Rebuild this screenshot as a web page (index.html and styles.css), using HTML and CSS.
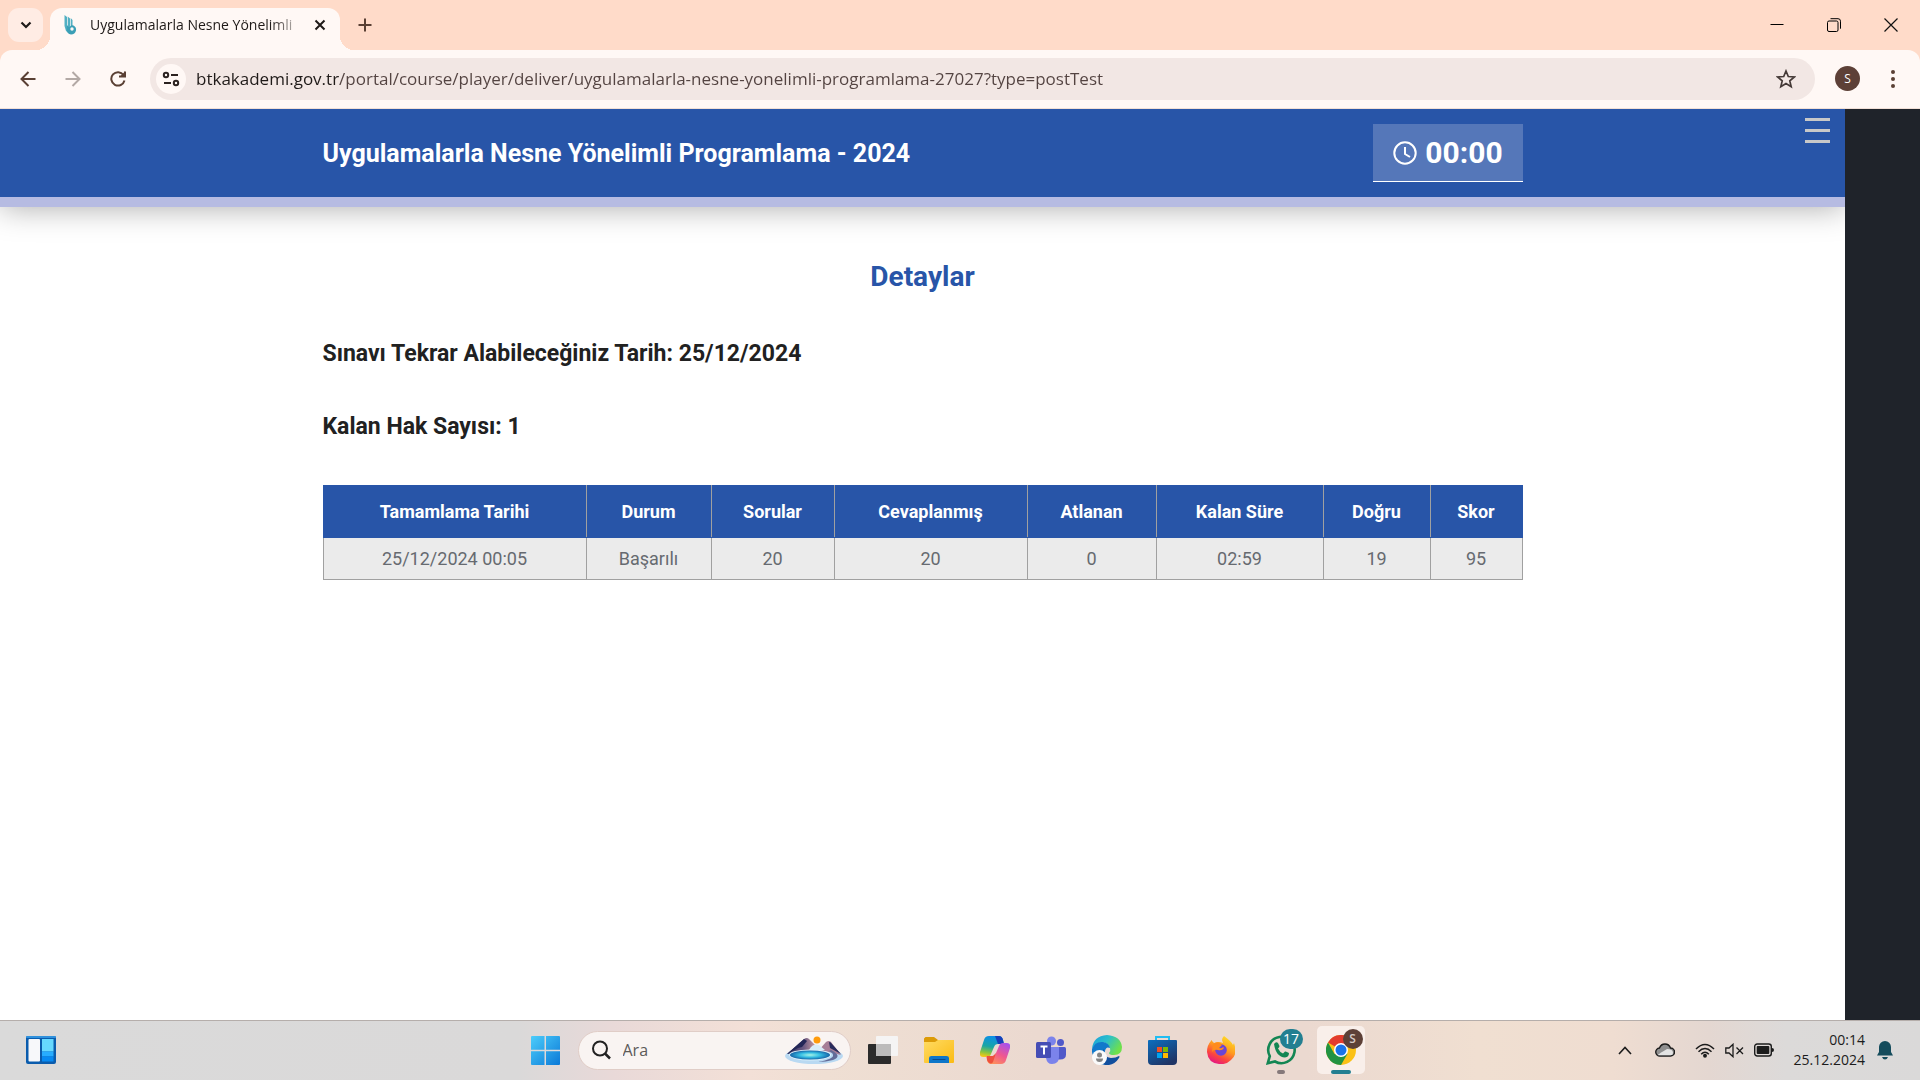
FILE: index.html
```html
<!DOCTYPE html>
<html lang="tr">
<head>
<meta charset="utf-8">
<title>Uygulamalarla Nesne Yönelimli Programlama - 2024</title>
<link rel="stylesheet" href="styles.css">
</head>
<body>
<div class="desktop">
  <header class="browser">
    <div class="tabstrip">
      <button class="tab-search" aria-label="Sekmelerde ara"><svg width="12" height="12" viewBox="0 0 12 12"><path d="M1.500 3.500 6 8l4.500-4.500" fill="none" stroke="#1f1a18" stroke-width="2.200"/></svg></button>
      <div class="tab">
        <svg class="favicon" width="14" height="20" viewBox="0 0 14 20"><path d="M.5 0 3 2v12l1.500 4L2 16 .5 11zM3.700 1.500 6 3.500v9l-2.300 2zM6.700 3 8.500 5v6l-1.800 1z" fill="#52b0c3"/><path d="M3 10q2 3 3 1.500Q8 9.500 9.500 10.500 12.500 12 12 15.500 11 19.500 7 19.500 3 19 2.500 14z" fill="#3b9fb6"/><circle cx="8" cy="14" r="1.700" fill="#fff8f5"/></svg>
        <span class="tab-title">Uygulamalarla Nesne Yönelimli</span>
        <button class="icon-button tab-close" aria-label="Sekmeyi kapat"><svg width="12" height="12" viewBox="0 0 12 12"><path d="M1.500 1.500l9 9M10.500 1.500l-9 9" stroke="#1f1a18" stroke-width="2"/></svg></button>
      </div>
      <button class="icon-button new-tab" aria-label="Yeni sekme"><svg width="14" height="14" viewBox="0 0 14 14"><path d="M7 .5v13M.5 7h13" stroke="#5a4034" stroke-width="2"/></svg></button>
      <div class="window-controls">
        <button class="icon-button" aria-label="Küçült"><svg width="14" height="14" viewBox="0 0 14 14"><path d="M.5 6.500h13" stroke="#000"/></svg></button>
        <button class="icon-button" aria-label="Geri yükle"><svg width="14" height="14" viewBox="0 0 14 14" fill="none" stroke="#000"><rect x=".5" y="3" width="10.500" height="10.500" rx="1.500"/><path d="M3.500.7h7.500a2.500 2.500 0 0 1 2.500 2.500v7.500"/></svg></button>
        <button class="icon-button" aria-label="Kapat"><svg width="14" height="14" viewBox="0 0 14 14"><path d="M.5.5l13 13M13.500.5l-13 13" stroke="#111" stroke-width="1.200"/></svg></button>
      </div>
    </div>
    <nav class="toolbar">
      <button class="icon-button nav-button" aria-label="Geri"><svg width="16" height="16" viewBox="0 0 16 16" fill="none" stroke="#5a4034" stroke-width="2"><path d="M15.500 8H1.500M8.500 1 1.500 8l7 7"/></svg></button>
      <button class="icon-button nav-button" aria-label="İleri"><svg width="16" height="16" viewBox="0 0 16 16" fill="none" stroke="#b3a9a5" stroke-width="2"><path d="M.5 8h14M7.500 1l7 7-7 7"/></svg></button>
      <button class="icon-button nav-button" aria-label="Yenile"><svg width="16" height="16" viewBox="0 0 16 16" fill="none" stroke="#5a4034" stroke-width="2"><path d="M13.500 4A6.700 6.700 0 1 0 14.500 9.500"/><path d="M15 .5v5.500H9.500z" fill="#5a4034" stroke="none"/><path d="M15 .5V5.500H9"/></svg></button>
      <div class="omnibox">
        <button class="site-info" aria-label="Site bilgileri"><svg width="18" height="18" viewBox="0 0 18 18" fill="none" stroke="#2b2220" stroke-width="2"><circle cx="4" cy="5" r="2.200"/><path d="M9 5h7M2 13h7"/><circle cx="14" cy="13" r="2.200"/></svg></button>
        <input class="address" type="text" aria-label="Adres çubuğu" value="btkakademi.gov.tr/portal/course/player/deliver/uygulamalarla-nesne-yonelimli-programlama-27027?type=postTest">
        <button class="icon-button star" aria-label="Yer işareti ekle"><svg width="20" height="20" viewBox="0 0 20 20"><path d="M10 2l2.300 5.500 6 .5-4.500 3.900 1.400 5.800-5.200-3.100-5.200 3.100 1.400-5.800L1.700 8l6-.5z" fill="none" stroke="#453a37" stroke-width="1.700"/></svg></button>
      </div>
      <button class="avatar" aria-label="Profil">S</button>
      <button class="icon-button menu" aria-label="Menü"><svg width="6" height="20" viewBox="0 0 6 20" fill="#5a4034"><circle cx="3" cy="3" r="2"/><circle cx="3" cy="10" r="2"/><circle cx="3" cy="17" r="2"/></svg></button>
    </nav>
  </header>

  <div class="viewport">
    <div class="player">
      <div class="course-bar">
        <div class="container course-row">
          <h1 class="course-title">Uygulamalarla Nesne Yönelimli Programlama - 2024</h1>
          <div class="timer">
            <svg width="24" height="24" viewBox="0 0 24 24" fill="none" stroke="#fff" stroke-width="2"><circle cx="12" cy="12" r="10.700"/><path d="M12 6v7l5 3"/></svg>
            <span>00:00</span>
          </div>
        </div>
        <button class="side-menu" aria-label="İçerik menüsü"><span></span><span></span><span></span></button>
      </div>
      <main class="container details">
        <h2 class="details-title">Detaylar</h2>
        <p class="info">Sınavı Tekrar Alabileceğiniz Tarih: 25/12/2024</p>
        <p class="info">Kalan Hak Sayısı: 1</p>
        <table class="results">
          <colgroup><col class="c-date"><col class="c-status"><col class="c-questions"><col class="c-answered"><col class="c-skipped"><col class="c-left"><col class="c-right"><col class="c-score"></colgroup>
          <thead><tr><th>Tamamlama Tarihi</th><th>Durum</th><th>Sorular</th><th>Cevaplanmış</th><th>Atlanan</th><th>Kalan Süre</th><th>Doğru</th><th>Skor</th></tr></thead>
          <tbody><tr><td>25/12/2024 00:05</td><td>Başarılı</td><td>20</td><td>20</td><td>0</td><td>02:59</td><td>19</td><td>95</td></tr></tbody>
        </table>
      </main>
    </div>
    <aside class="drawer-edge"></aside>
  </div>

  <footer class="taskbar">
    <div class="taskbar-left">
      <button class="icon-button" aria-label="Pencere öğeleri"><svg width="30" height="28" viewBox="0 0 30 28"><rect width="30" height="28" rx="2" fill="#0a5cad"/><rect width="30" height="2" rx="1" fill="#2f91dd"/><rect x="2.500" y="3" width="11.500" height="22.500" rx="1" fill="#f7f8fa"/><rect x="16" y="3" width="11.500" height="12.500" fill="#66d9ff"/><rect x="16" y="15.500" width="11.500" height="5" fill="#27adff"/><rect x="16" y="20.500" width="11.500" height="5" fill="#078af2"/></svg></button>
    </div>
    <div class="taskbar-apps">
      <button class="app" aria-label="Başlat"><svg width="29" height="29" viewBox="0 0 29 29"><defs><linearGradient id="win" x1="0" y1="0" x2="1" y2="1" gradientUnits="objectBoundingBox"><stop stop-color="#4ccdfb"/><stop offset="1" stop-color="#0b79d7"/></linearGradient></defs><path d="M1 0h12.500v13.800H0V1a1 1 0 0 1 1-1zM15 0h13a1 1 0 0 1 1 1v12.800H15zM0 15.200h13.500V29H1a1 1 0 0 1-1-1zM15 15.200h14V28a1 1 0 0 1-1 1H15z" fill="url(#win)"/></svg></button>
      <label class="search">
        <svg width="20" height="20" viewBox="0 0 20 20" fill="none" stroke="#222" stroke-width="2"><circle cx="9" cy="8.500" r="7"/><path d="M14 13.500l5 5" stroke-width="2.500"/></svg>
        <input type="text" placeholder="Ara" aria-label="Ara">
        <svg width="58" height="28" viewBox="0 0 58 28"><defs><linearGradient id="mt" x1="0" x2="1"><stop stop-color="#262a5c"/><stop offset=".55" stop-color="#6d5b83"/><stop offset="1" stop-color="#e0a9a4"/></linearGradient><radialGradient id="lake"><stop stop-color="#a9f3e5"/><stop offset=".5" stop-color="#36bfe4"/><stop offset="1" stop-color="#1565a8"/></radialGradient></defs><ellipse cx="29" cy="20" rx="29" ry="8" fill="#b9d9f2"/><path d="M2 18 19 3q3-2 5 0l9 9-6 5z" fill="url(#mt)"/><path d="M2 18 19 3l3 2-5 6-4 1z" fill="#242757"/><path d="M34 14l7-8q3-2 5 0l10 13-12-3z" fill="#a67e97"/><path d="M44 6q2 0 3 2l9 10-11-6z" fill="#292c5c"/><path d="M24 14q4-7 10-5l6 5-14 3z" fill="#d8ecf8"/><ellipse cx="25" cy="19" rx="21" ry="5.500" fill="#dff2fb"/><ellipse cx="25" cy="19" rx="20" ry="4.500" fill="url(#lake)"/><path d="M46 14q12 6 2 10-7 2-15 2 16-3 15-7 0-2-4-4z" fill="#626b98"/><circle cx="32" cy="4" r="3.500" fill="#ff9b0b"/></svg>
      </label>
      <button class="app" aria-label="Görev görünümü"><svg width="30" height="28" viewBox="0 0 30 28"><rect y="8" width="23" height="20" rx="1" fill="#2b2b2b"/><rect x="8" width="22" height="20" rx="1" fill="#f5f4f4"/><rect x="8" y="8" width="15" height="12" fill="#bcbbbb"/></svg></button>
      <button class="app" aria-label="Dosya Gezgini"><svg width="30" height="28" viewBox="0 0 30 28"><defs><linearGradient id="fo" x2="1" y2="1"><stop stop-color="#ffdb63"/><stop offset="1" stop-color="#fbbb13"/></linearGradient></defs><path d="M1.500 1H10l4 3h15v4H0V2.500z" fill="#dc9b08"/><path d="M0 6h11l3-2h16v22a1 1 0 0 1-1 1H1a1 1 0 0 1-1-1z" fill="url(#fo)"/><path d="M5 27v-5q0-2 2.500-2h15q2.500 0 2.500 2v5z" fill="#0e76c9"/><path d="M9 23.500h12" stroke="#0a4a8c" stroke-width="1.200" stroke-linecap="round"/></svg></button>
      <button class="app" aria-label="Copilot"><svg width="30" height="28" viewBox="0 0 30 28"><defs><linearGradient id="c1" x1=".5" x2=".3" y2="1"><stop stop-color="#0d8fe8"/><stop offset=".5" stop-color="#18a5a5"/><stop offset=".8" stop-color="#8bc53f"/><stop offset="1" stop-color="#f6c915"/></linearGradient><linearGradient id="c2" x1=".8" x2=".2" y2="1"><stop stop-color="#a750ec"/><stop offset=".5" stop-color="#f0578f"/><stop offset="1" stop-color="#ff9855"/></linearGradient></defs><path d="M9 0h10q3 0 4 4l1 4h-6q-3 0-4 3l-3 7q-1 3-4 3H3q-4 0-3-5L4 4q1-4 5-4z" fill="url(#c1)"/><path d="M15 0h4q3 0 4 4l1 4h-6z" fill="#173fb9"/><path d="M21 28H11q-3 0-4-4l-1-4h6q3 0 4-3l3-7q1-3 4-3h4q4 0 3 5l-4 12q-1 4-5 4z" fill="url(#c2)"/><path d="M7 20h6l3-3-3 9q-1 2-3 1.500Q8 27 7 24z" fill="#ee513e"/></svg></button>
      <button class="app" aria-label="Teams"><svg width="30" height="28" viewBox="0 0 30 28"><circle cx="24.500" cy="6.500" r="3.500" fill="#5059c9"/><path d="M20 11h8.500q1.500 0 1.500 1.500v6q0 5-6 5h-4z" fill="#5059c9"/><circle cx="15.500" cy="5" r="4.500" fill="#7b83eb"/><path d="M10 11h13v10q0 7-7 7-5 0-6-6z" fill="#7b83eb"/><rect y="6" width="15" height="16" rx="1.500" fill="#454db5"/><path d="M4.500 10.500h7M8 10.500v8" stroke="#fff" stroke-width="2"/></svg></button>
      <button class="app" aria-label="Edge"><svg width="30" height="30" viewBox="0 0 30 30"><defs><linearGradient id="e1" x1="0" x2="1" y2=".5"><stop stop-color="#1a9ddd"/><stop offset=".5" stop-color="#2bbfcb"/><stop offset="1" stop-color="#6fe04b"/></linearGradient></defs><path d="M0 14Q1 1 15 0q14 1 15 12 0 8-8 8-5 0-5-2 2-2 1-5-3-7-11-5-5 2-7 6z" fill="url(#e1)"/><path d="M0 14q3-8 11-7 6 1 7 6-4-2-5 3-1 8 6 13-16 4-19-12z" fill="#1279cb"/><path d="M12 14q-1 8 7 9 5 0 8-2 1 0 0 2-5 8-14 7Q4 25 12 14z" fill="#114f9e"/><circle cx="7.500" cy="22.500" r="7.500" fill="#fafafa"/><circle cx="7.500" cy="20" r="2.500" fill="#858585"/><path d="M4 23.500h7q0 3.500-3.500 3.500T4 23.500z" fill="#858585"/></svg></button>
      <button class="app" aria-label="Microsoft Store"><svg width="29" height="29" viewBox="0 0 29 29"><defs><linearGradient id="st" x2=".6" y2="1"><stop stop-color="#0b6fc0"/><stop offset="1" stop-color="#1f3566"/></linearGradient></defs><path d="M8 6V1h13v5" fill="none" stroke="#21bdf2" stroke-width="2"/><path d="M0 5q0-1 1-1h27q1 0 1 1v20q0 4-4 4H4q-4 0-4-4z" fill="url(#st)"/><path d="M9 11h5v5H9z" fill="#f25022"/><path d="M15 11h5v5h-5z" fill="#7fba00"/><path d="M9 17h5v5H9z" fill="#00a4ef"/><path d="M15 17h5v5h-5z" fill="#ffb900"/></svg></button>
      <button class="app wide" aria-label="Firefox"><svg width="28" height="28" viewBox="0 0 28 28"><defs><linearGradient id="ff" x1=".8" x2=".3" y2="1"><stop stop-color="#ffe226"/><stop offset=".45" stop-color="#ff9b1f"/><stop offset=".75" stop-color="#fb4440"/><stop offset="1" stop-color="#e31587"/></linearGradient></defs><path d="M4 5q1-2 1 0l2 2q5-2 9 0l-1-3q0-2 2-4 8 6 9 9l1-2q4 12-3 17-5 5-12 4-11-1-12-12Q0 9 4 5z" fill="url(#ff)"/><circle cx="14" cy="14" r="5.800" fill="#6b45d6"/><path d="M6 8q6-4 9 1l-3 3q3 1 4-1l1 1q-2 3-6 2-4-1-6 2z" fill="#ff8b1c"/></svg></button>
      <button class="app wide running" aria-label="WhatsApp"><svg width="30" height="30" viewBox="0 0 30 30"><path d="M1.800 28.200l2-7A13.200 13.200 0 1 1 9 26.500z" fill="none" stroke="#138653" stroke-width="2.600"/><path d="M8 9q2-3 4-1l1.500 3q0 1-1.500 2.500 2 4 5 5l2-2q1-.5 4 1.500 0 4-4 4.500Q10 22 8 9z" fill="#138653"/></svg><span class="badge count">17</span></button>
      <button class="app wide active" aria-label="Google Chrome"><span class="active-tile"><svg width="30" height="30" viewBox="0 0 30 30"><circle cx="15" cy="15" r="15" fill="#fbc116"/><path d="M15 15 2 7.500A15 15 0 0 1 28 7.500z" fill="#e33b2e"/><path d="M2 7.500A15 15 0 0 0 15 30l6.500-11.200L8.500 19z" fill="#229342"/><circle cx="15" cy="15" r="7" fill="#fff"/><circle cx="15" cy="15" r="5.500" fill="#1a73e8"/></svg></span><span class="badge profile">S</span></button>
    </div>
    <div class="tray">
      <button class="icon-button" aria-label="Gizli simgeler"><svg width="14" height="9" viewBox="0 0 14 9"><path d="M1 8l6-6.500L13 8" fill="none" stroke="#1c1c1c" stroke-width="1.600"/></svg></button>
      <button class="icon-button cloud" aria-label="OneDrive"><svg width="20" height="14" viewBox="0 0 20 14"><path d="M5 13a4 4 0 0 1-.5-8Q6 1 10 1t5.500 4a4 4 0 0 1 0 8z" fill="#8f8f8f" stroke="#1c1c1c" stroke-width="1.400"/><path d="M2.500 12Q5 10 12 6q6 0 6 4 0 2.300-2.500 2.300H5q-2 0-2.500-.3z" fill="#e4e4e4"/></svg></button>
      <div class="status">
        <button class="icon-button" aria-label="Ağ"><svg width="20" height="15" viewBox="0 0 20 15" fill="none" stroke="#1c1c1c" stroke-width="1.500"><path d="M1 6q9-9 18 0M3.500 8.700q6.500-6.500 13 0M6.200 11.200q3.800-4 7.600 0"/><circle cx="10" cy="12.800" r="1.200" fill="#1c1c1c"/></svg></button>
        <button class="icon-button" aria-label="Ses"><svg width="19" height="15" viewBox="0 0 19 15" fill="none" stroke="#1c1c1c" stroke-width="1.300"><path d="M.8 5H4l4-3.700v12.400L4 10H.8zM11.500 4.500l6.500 6.500M18 4.500 11.500 11"/></svg></button>
        <button class="icon-button" aria-label="Pil"><svg width="20" height="14" viewBox="0 0 20 14"><rect x=".7" y="1" width="16.600" height="12" rx="2.500" fill="none" stroke="#1c1c1c" stroke-width="1.400"/><rect x="2.700" y="3" width="12.600" height="8" rx="1" fill="#1c1c1c"/><path d="M18 5q2 0 2 2t-2 2z" fill="#1c1c1c"/></svg></button>
      </div>
      <button class="clock"><span>00:14</span><span>25.12.2024</span></button>
      <button class="icon-button" aria-label="Bildirimler"><svg width="16" height="20" viewBox="0 0 16 20" fill="#144c5c"><path d="M8 1a6 6 0 0 1 6 6v5l2 3.500H0L2 12V7a6 6 0 0 1 6-6zM5 17h6q-1 2.500-3 2.500T5 17z"/></svg></button>
    </div>
  </footer>
</div>
</body>
</html>
```
FILE: styles.css
```css
* { box-sizing: border-box; }

body {
  margin: 0;
  font-family: "Open Sans", sans-serif;
  color: #212529;
}

button, input {
  margin: 0;
  padding: 0;
  border: 0;
  background: none;
  font: inherit;
  color: inherit;
  outline: 0;
}

h1, h2, p { margin: 0; }

svg { display: block; flex: none; }

.icon-button {
  display: flex;
  align-items: center;
  justify-content: center;
  flex: none;
}

.desktop {
  display: flex;
  flex-direction: column;
  min-height: 100vh;
}

/* Browser window */
.browser { background: #ffdbc9; }

.tabstrip {
  display: flex;
  align-items: center;
  height: 50px;
  padding-left: 8px;
}

.tab-search {
  display: flex;
  align-items: center;
  justify-content: center;
  width: 35px;
  height: 34px;
  border-radius: 11px;
  background: #ffece4;
}

.tab {
  position: relative;
  display: flex;
  align-items: center;
  align-self: flex-end;
  width: 290px;
  height: 42px;
  margin-left: 7px;
  padding: 0 12px 8px 14px;
  border-radius: 12px 12px 0 0;
  background: #fff8f5;
}

.tab::before, .tab::after {
  content: "";
  position: absolute;
  bottom: 0;
  width: 14px;
  height: 14px;
}

.tab::before {
  right: 100%;
  background: radial-gradient(circle at 0 0, transparent 14px, #fff8f5 14px);
}

.tab::after {
  left: 100%;
  background: radial-gradient(circle at 100% 0, transparent 14px, #fff8f5 14px);
}

.tab-title {
  flex: 1;
  margin-left: 12px;
  white-space: nowrap;
  font-size: 14px;
  line-height: 20px;
  color: #1f1a18;
  mask-image: linear-gradient(90deg, #000 180px, transparent 216px);
}

.tab-close { width: 16px; height: 16px; margin-left: 10px; }
.new-tab { width: 34px; height: 34px; margin-left: 8px; }
.window-controls { display: flex; margin-left: auto; padding-right: 1px; }
.window-controls .icon-button { width: 57px; height: 50px; }

.toolbar {
  display: flex;
  align-items: center;
  height: 59px;
  padding: 0 15px 1px 5px;
  border-bottom: 1px solid #f1dfd6;
  border-radius: 12px 12px 0 0;
  background: #fff8f5;
}

.nav-button { width: 45px; height: 42px; }

.omnibox {
  display: flex;
  align-items: center;
  flex: 1;
  height: 42px;
  margin-left: 10px;
  padding: 0 19px 0 6px;
  border-radius: 21px;
  background: #f2e7e4;
}

.site-info {
  display: flex;
  align-items: center;
  justify-content: center;
  width: 30px;
  height: 30px;
  border-radius: 50%;
  background: #fff8f5;
}

.address {
  flex: 1;
  height: 30px;
  margin-left: 10px;
  font-size: 17px;
  background: linear-gradient(90deg, #1f1a18 143px, #534341 143px);
  background-clip: text;
  -webkit-text-fill-color: transparent;
}

.avatar {
  width: 25px;
  height: 25px;
  margin-left: 20px;
  border-radius: 50%;
  background: #5d4037;
  font-size: 12px;
  line-height: 25px;
  color: #fff;
}

.menu { width: 24px; height: 30px; margin-left: 21px; }

/* Course page */
.viewport {
  display: flex;
  flex: 1;
  background: #fff;
  font-family: Roboto, sans-serif;
}

.player { flex: 1; min-width: 0; overflow: hidden; }

.drawer-edge { flex: none; width: 75px; background: #1f232a; }

.container {
  max-width: 1200px;
  margin: 0 auto;
}

.course-bar {
  position: relative;
  border-bottom: 10px solid #b6bbe2;
  background: #2855a8;
  box-shadow: 0 0 32px rgba(0, 0, 0, 0.35);
}

.course-row {
  display: flex;
  align-items: center;
  justify-content: space-between;
  height: 88px;
}

.course-title {
  padding-top: 2px;
  font-size: 25px;
  font-weight: 700;
  line-height: 30px;
  color: #fff;
}

.timer {
  display: flex;
  align-items: center;
  justify-content: center;
  gap: 8px;
  width: 150px;
  height: 58px;
  padding-left: 1px;
  border-bottom: 1px solid #fff;
  background: #5577b9;
  font-size: 30px;
  font-weight: 700;
  color: #fff;
}

.side-menu {
  position: absolute;
  top: 9px;
  right: 15px;
  display: flex;
  flex-direction: column;
  gap: 8px;
  width: 25px;
}

.side-menu span { height: 3px; background: #c8c8c8; }

.details { padding-top: 52px; }

.details-title {
  font-size: 28px;
  font-weight: 700;
  line-height: 36px;
  text-align: center;
  color: #2855a8;
}

.info {
  font-size: 23px;
  font-weight: 700;
  line-height: 29px;
  margin-top: 44px;
  color: #212121;
}

.results {
  width: 100%;
  margin-top: 44px;
  border-collapse: collapse;
  table-layout: fixed;
  font-size: 18px;
  line-height: 24px;
  text-align: center;
}

.results th {
  height: 52px;
  padding: 0;
  border: 1px solid #2855a8;
  border-left-color: #a0a0a0;
  border-right-color: #a0a0a0;
  background: #2855a8;
  color: #fff;
}

.results th:first-child { border-left-color: #2855a8; }
.results th:last-child { border-right-color: #2855a8; }

.results td {
  height: 42px;
  padding: 0;
  border: 1px solid #a0a0a0;
  border-top-color: #2855a8;
  background: #ebebeb;
  color: #666a70;
}

.c-date { width: 22%; }
.c-status { width: 125px; }
.c-questions { width: 123px; }
.c-answered { width: 193px; }
.c-skipped { width: 129px; }
.c-left { width: 167px; }
.c-right { width: 107px; }
.c-score { width: 92px; }

/* Taskbar */
.taskbar {
  display: grid;
  grid-template-columns: 1fr auto 1fr;
  align-items: center;
  height: 60px;
  padding-bottom: 1px;
  border-top: 1px solid #b5aeab;
  background: linear-gradient(90deg, #dadada 0%, #dad9d9 27%, #e9d9d8 32%, #f3e0d7 39%, #efdfd3 43%, #ebd9d0 54%, #ebd9d0 68%, #f0dfd1 77%, #efddd1 84%, #e4d7d1 89%, #dcdad9 93%, #dad9d9 100%);
}

.taskbar-left { padding-left: 26px; }

.taskbar-apps {
  display: flex;
  align-items: center;
  padding-right: 32px;
}

.app {
  position: relative;
  display: flex;
  align-items: center;
  justify-content: center;
  width: 56px;
  height: 58px;
}

.app.wide { width: 60px; }

.search {
  display: flex;
  align-items: center;
  width: 273px;
  height: 39px;
  margin: 0 4px;
  padding: 0 7px 0 12px;
  border: 1px solid #e0cdc7;
  border-radius: 20px;
  background: #f9f4f2;
}

.search input {
  flex: 1;
  min-width: 0;
  margin-left: 12px;
  font-size: 16px;
}

.search input::placeholder { color: #5c5a59; opacity: 1; }

.badge {
  position: absolute;
  border-radius: 50%;
  text-align: center;
  color: #fff;
}

.count {
  top: 8px;
  left: 29px;
  width: 23px;
  height: 20px;
  border-radius: 10px;
  background: #237f91;
  font-size: 14px;
  line-height: 20px;
}

.profile {
  top: 8px;
  left: 32px;
  width: 20px;
  height: 20px;
  background: #5d4037;
  font-size: 12px;
  font-weight: 600;
  line-height: 20px;
  color: #d3c8c4;
}

.active-tile {
  display: flex;
  align-items: center;
  justify-content: center;
  width: 48px;
  height: 48px;
  border-radius: 5px;
  background: #f9efea;
}

.running::after, .active::after {
  content: "";
  position: absolute;
  bottom: 5px;
  width: 8px;
  height: 4px;
  border-radius: 2px;
  background: #85797a;
}

.active::after { width: 20px; background: #237f91; }

.tray {
  display: flex;
  align-items: center;
  justify-content: flex-end;
  padding-right: 27px;
}

.tray .cloud { margin: 0 20px 0 23px; }

.status { display: flex; align-items: center; gap: 10px; }

.clock {
  display: flex;
  flex-direction: column;
  align-items: flex-end;
  margin: 0 12px 0 20px;
  font-size: 14px;
  line-height: 20px;
  color: #1c1c1c;
}
```
